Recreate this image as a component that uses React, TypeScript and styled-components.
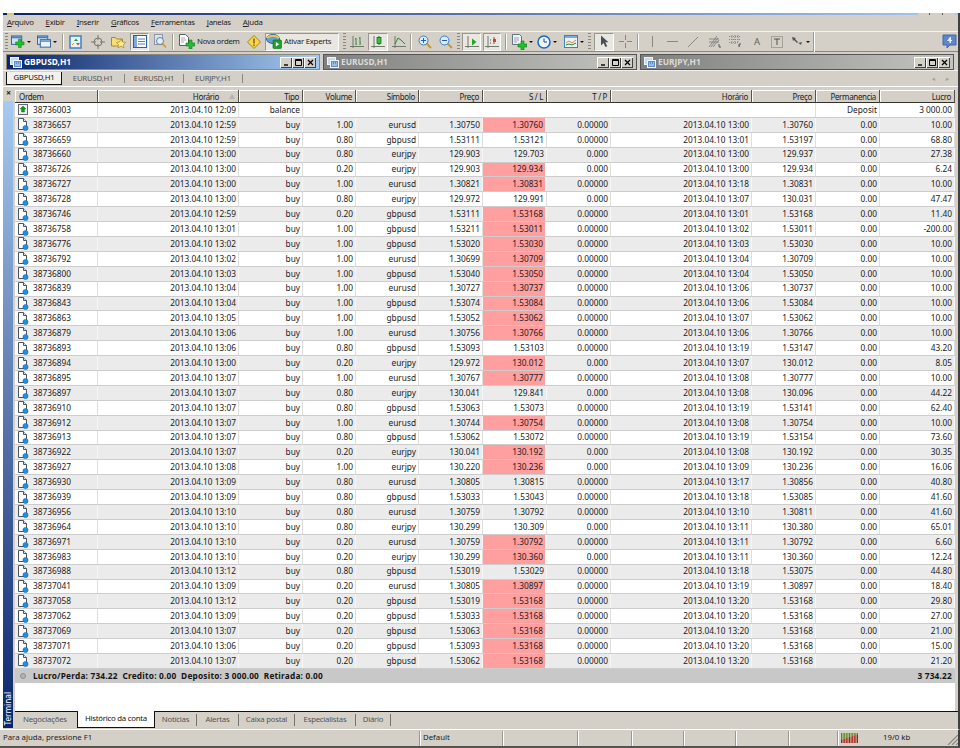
import React from 'react';
import styled, { createGlobalStyle } from 'styled-components';

const FONT = '"Noto Sans", "DejaVu Sans", sans-serif';
const FACE = '#d4d0c8';
const COLUMNS = '83px 141px 64px 53px 63px 64px 64px 64px 141px 64px 64px 75px';
const LABEL = 'font-size: 7.8px; letter-spacing: -0.25px;';

const Global = createGlobalStyle`
  html, body { margin: 0; padding: 0; background: #fff; }
  * { box-sizing: border-box; }
`;

const Screen = styled.div`
  width: 960px;
  height: 748px;
  padding-top: 13px;
  display: flex;
  flex-direction: column;
  overflow: hidden;
  background: #fff;
  color: #222;
  font: 8.3px/1 ${FONT};
`;

const Frame = styled.div`
  flex: 1;
  min-height: 0;
  margin-left: 3px;
  display: flex;
  flex-direction: column;
  background: ${FACE};
  border-right: 2px solid #404040;
`;

const AppTitle = styled.div`
  height: 2px;
  flex: none;
  display: flex;
  justify-content: space-between;
  padding: 0 3px 0 4px;
  background: linear-gradient(90deg, #0a246a, #a6caf0);
`;

const AppIconTip = styled.span`
  width: 7px;
  background: #d8c860;
`;

const AppButtonTips = styled.span`
  width: 37px;
  background: linear-gradient(90deg, ${FACE} 0 11px, #555 11px 12px, ${FACE} 12px 24px, #555 24px 25px, ${FACE} 25px);
`;

const MenuBar = styled.div`
  height: 16px;
  flex: none;
  display: flex;
  align-items: center;
  gap: 12px;
  padding-left: 4px;
  ${LABEL}
`;

const MenuItem = styled.span`
  display: inline-block;
  &::first-letter { text-decoration: underline; }
`;

const Toolbar = styled.div`
  height: 21px;
  flex: none;
  display: flex;
  align-items: center;
  padding-left: 2px;
  border-top: 1px solid #f4f2ec;
  border-bottom: 1px solid #8a877f;
`;

const Grip = styled.div<{ $ml?: number }>`
  width: 3px;
  height: 17px;
  flex: none;
  margin-left: ${({ $ml }) => $ml ?? 0}px;
  background: repeating-linear-gradient(180deg, #8a877f 0 1px, transparent 1px 3px);
`;

const Sep = styled.div<{ $ml: number; $light?: boolean }>`
  width: 2px;
  height: ${({ $light }) => ($light ? 20 : 16)}px;
  flex: none;
  margin-left: ${({ $ml }) => $ml}px;
  border-left: 1px solid #a09d95;
  border-right: 1px solid #fff;
`;

const Tool = styled.div<{ $w: number; $ml: number; $on?: boolean; $start?: boolean }>`
  width: ${({ $w }) => $w}px;
  height: 18px;
  flex: none;
  margin-left: ${({ $ml }) => $ml}px;
  display: flex;
  align-items: center;
  justify-content: ${({ $start }) => ($start ? 'flex-start' : 'center')};
  gap: 2px;
  white-space: nowrap;
  ${LABEL}
  ${({ $on }) =>
    $on &&
    `background: #e9e7e1;
     border: 1px solid;
     border-color: #9a978f #fff #fff #9a978f;`}
`;

const Caret = styled.span`
  width: 0;
  height: 0;
  flex: none;
  border-left: 2px solid transparent;
  border-right: 2px solid transparent;
  border-top: 2px solid #111;
`;

const Spacer = styled.div`
  flex: 1;
`;

const WindowStrip = styled.div`
  height: 18px;
  flex: none;
  display: flex;
  gap: 5px;
  padding: 3px 3px 1px 4px;
`;

const WindowTitle = styled.div<{ $active?: boolean }>`
  width: 312px;
  flex: none;
  display: flex;
  align-items: center;
  gap: 2px;
  padding: 0 3px;
  font-weight: 700;
  font-size: 8.4px;
  color: ${({ $active }) => ($active ? '#fff' : '#dcdad4')};
  background: ${({ $active }) =>
    $active
      ? 'linear-gradient(90deg, #0a246a, #a6caf0)'
      : 'linear-gradient(90deg, #808080, #c4c4c0)'};
  box-shadow: 0 0 0 1px ${({ $active }) => ($active ? '#8a877f' : '#555')};
`;

const WinButtons = styled.div`
  margin-left: auto;
  display: flex;
`;

const WinButton = styled.div`
  width: 12px;
  height: 11px;
  background: ${FACE};
  box-shadow: inset 1px 1px #fff, inset -1px -1px #404040;
  display: flex;
  align-items: center;
  justify-content: center;
  color: #000;
`;

const ChartTabs = styled.div`
  height: 17px;
  flex: none;
  display: flex;
  align-items: stretch;
  padding: 1px 0 1px 3px;
  border-top: 1px solid #f4f2ec;
  border-bottom: 1px solid #fff;
  ${LABEL}
`;

const ChartTab = styled.div<{ $active?: boolean; $w: number }>`
  width: ${({ $w }) => $w}px;
  flex: none;
  display: flex;
  align-items: center;
  justify-content: center;
  color: ${({ $active }) => ($active ? '#111' : '#555')};
  ${({ $active }) =>
    $active
      ? 'background: #f2f1ec; border: 1px solid #111; border-top: 0;'
      : 'border-right: 1px solid #8a877f; margin: 2px 0;'}
`;

const Pager = styled.div`
  margin: auto 9px auto auto;
  display: flex;
  gap: 11px;
  color: #a8a59d;
  font-size: 7px;
`;

const Terminal = styled.div`
  flex: 1;
  min-height: 0;
  display: flex;
`;

const Side = styled.div`
  width: 10px;
  flex: none;
  margin-right: 2px;
  display: flex;
  flex-direction: column;
`;

const SideClose = styled.div`
  height: 14px;
  padding-top: 1px;
  padding-left: 1px;
  text-align: center;
  font-weight: 700;
  font-size: 9px;
`;

const SideBand = styled.div`
  flex: 1;
  display: flex;
  align-items: flex-end;
  justify-content: center;
  background: linear-gradient(180deg, #a6caf0, #0a246a);
  color: #fff;
  margin-bottom: 1px;
`;

const SideLabel = styled.span`
  writing-mode: vertical-rl;
  transform: rotate(180deg);
  font-size: 8.2px;
  padding-top: 2px;
`;

const Pane = styled.div`
  flex: 1;
  min-width: 0;
  padding-top: 3px;
  display: flex;
  flex-direction: column;
`;

const HeaderRow = styled.div`
  height: 13px;
  flex: none;
  width: 940px;
  display: grid;
  grid-template-columns: ${COLUMNS};
  font-size: 8px;
  letter-spacing: -0.35px;
`;

const HeaderCell = styled.div<{ $left?: boolean }>`
  display: flex;
  align-items: center;
  justify-content: ${({ $left }) => ($left ? 'flex-start' : 'flex-end')};
  padding: 1px 3px 0 4px;
  border-right: 1px solid #55534e;
  border-bottom: 1px solid #33322f;
  box-shadow: inset 1px 1px #fff;
`;

const SortMark = styled.span`
  width: 0;
  height: 0;
  margin-left: 10px;
  border-left: 3px solid transparent;
  border-right: 3px solid transparent;
  border-bottom: 5px solid #b5b2aa;
`;

const Sheet = styled.div`
  flex: 1;
  min-height: 0;
  width: 940px;
  background: #fff;
  display: flex;
  flex-direction: column;
`;

const Row = styled.div<{ $alt?: boolean }>`
  height: 14.9px;
  flex: none;
  display: grid;
  grid-template-columns: ${COLUMNS};
  background: ${({ $alt }) => ($alt ? '#ebebeb' : '#fff')};
  border-bottom: 1px solid #cdcdcd;
`;

const Cell = styled.div<{ $alt?: boolean; $hit?: boolean; $span?: number; $first?: boolean }>`
  display: flex;
  align-items: center;
  justify-content: ${({ $first }) => ($first ? 'flex-start' : 'flex-end')};
  gap: 4px;
  padding: 0 ${({ $first }) => ($first ? 0 : 2)}px 0 ${({ $first }) => ($first ? 2 : 0)}px;
  white-space: nowrap;
  grid-column: span ${({ $span }) => $span ?? 1};
  background: ${({ $hit }) => ($hit ? '#ff9f9f' : 'transparent')};
  background-clip: padding-box;
  border-right: ${({ $hit }) => ($hit ? 2 : 1)}px solid
    ${({ $alt, $hit }) => ($hit ? ($alt ? '#f4f4f4' : '#fff') : $alt ? '#f6f6f6' : '#dedede')};
`;

const Summary = styled.div`
  height: 14.5px;
  flex: none;
  display: flex;
  align-items: center;
  gap: 5px;
  padding: 0 3px 0 5px;
  background: #c8c8c8;
  font-weight: 700;
  letter-spacing: 0.2px;
  color: #151515;
`;

const Dot = styled.span`
  width: 6px;
  height: 6px;
  border-radius: 50%;
  border: 1px solid #8e8e8e;
  background: #b4b4b4;
  margin-right: 2px;
`;

const SummaryTotal = styled.span`
  margin-left: auto;
`;

const TermTabs = styled.div`
  height: 16px;
  flex: none;
  display: flex;
  align-items: stretch;
  padding: 0 4px 1px 8px;
  border-top: 1px solid #111;
  box-sizing: content-box;
  ${LABEL}
`;

const TermTab = styled.div<{ $w: number; $active?: boolean; $plain?: boolean }>`
  width: ${({ $w }) => $w}px;
  flex: none;
  display: flex;
  align-items: center;
  justify-content: ${({ $plain }) => ($plain ? 'flex-start' : 'center')};
  padding-bottom: 1px;
  color: ${({ $active }) => ($active ? '#111' : '#555')};
  ${({ $active, $plain }) =>
    $active
      ? 'background: #fff; border: 1px solid #111; border-top: 0; margin-top: -1px;'
      : $plain
        ? ''
        : 'border-right: 1px solid #77746d; margin: 2px 0;'}
`;

const StatusBar = styled.div`
  height: 19px;
  flex: none;
  display: flex;
  align-items: stretch;
  background: ${FACE};
  border-top: 1px solid #fff;
  border-bottom: 2px solid #55534e;
  border-right: 2px solid #404040;
  font-size: 7.8px;
`;

const StatusCell = styled.div<{ $w?: number }>`
  ${({ $w }) => ($w ? `width: ${$w}px; flex: none;` : 'flex: 1;')}
  display: flex;
  align-items: center;
  padding: 0 0 1px 3px;
  margin-top: 1px;
  & + & { border-left: 1px solid #9a978f; box-shadow: inset 1px 0 #fff; }
`;

const StatusKb = styled.span`
  margin-left: 24px;
`;

const GripCorner = styled.svg`
  margin-left: auto;
  align-self: flex-end;
`;

/* icons */
const RowDoc = () => (
  <svg width="12" height="13" viewBox="0 0 12 13">
    <path d="M1.5.5h5l3 3v8h-8z" fill="#fff" stroke="#4a5560" />
    <path d="M6.5.5v3h3" fill="#dfe6ee" stroke="#4a5560" />
    <circle cx="8.5" cy="10" r="2.6" fill="#1f8fe0" stroke="#0e5fa8" strokeWidth=".5" />
  </svg>
);

const BalanceIcon = () => (
  <svg width="12" height="13" viewBox="0 0 12 13">
    <rect x="1.5" y="1.5" width="9" height="10" fill="#f2f2ee" stroke="#667" />
    <path d="M6 3l3 3H7.5v3h-3V6H3z" fill="#0a9a1c" stroke="#06660f" strokeWidth=".4" />
  </svg>
);

const Plus = ({ x, y }: { x: number; y: number }) => (
  <path
    d={`M${x + 3} ${y}h3v3h3v3h-3v3h-3v-3h-3v-3h3z`}
    fill="#22c02c"
    stroke="#0c7a14"
    strokeWidth=".6"
  />
);

const NewChart = () => (
  <svg width="15" height="14" viewBox="0 0 15 14">
    <rect x=".5" y=".5" width="11" height="9" fill="#cfe0f4" stroke="#2c5f9e" />
    <rect x="1" y="1" width="10" height="2" fill="#3f7fc6" />
    <Plus x={5} y={4} />
  </svg>
);

const Profiles = () => (
  <svg width="15" height="14" viewBox="0 0 15 14">
    <rect x=".5" y=".5" width="11" height="9" fill="#dbe7f5" stroke="#2c5f9e" />
    <rect x="1" y="1" width="10" height="2" fill="#3f7fc6" />
    <rect x="3.5" y="4.5" width="11" height="8" fill="#eef3fa" stroke="#2c5f9e" />
    <rect x="4" y="5" width="10" height="2" fill="#6f9fd8" />
  </svg>
);

const MarketWatch = () => (
  <svg width="13" height="14" viewBox="0 0 13 14">
    <rect x="1" y="1" width="11" height="12" fill="#eaf2fb" stroke="#3f7fc6" strokeWidth="1.5" />
    <path d="M7 3.5l2 2.5H5z" fill="#1aa22a" />
    <path d="M9 10.5L7 8h4z" fill="#e0382a" />
    <path d="M3 10l2-2" stroke="#e0842a" />
  </svg>
);

const Navigator = () => (
  <svg width="14" height="14" viewBox="0 0 14 14" fill="none" stroke="#7a776f">
    <circle cx="7" cy="7" r="4" />
    <path d="M7 0v5M7 9v5M0 7h5M9 7h5" />
  </svg>
);

const Favorites = () => (
  <svg width="15" height="14" viewBox="0 0 15 14">
    <path d="M.5 2.5h4l1 1.5h6v7h-11z" fill="#f7dc7a" stroke="#a88a2a" />
    <path d="M10 4l1.5 3 3.2.4-2.3 2.2.6 3.2-3-1.6-3 1.6.6-3.2-2.3-2.2 3.2-.4z" fill="#fbe98c" stroke="#a88a2a" strokeWidth=".7" />
  </svg>
);

const TerminalIcon = () => (
  <svg width="14" height="13" viewBox="0 0 14 13">
    <rect x=".5" y=".5" width="13" height="12" fill="#fff" stroke="#2c5f9e" />
    <rect x="1" y="1" width="3" height="11" fill="#7fa9dc" />
    <path d="M5 4h7M5 6.5h7M5 9h7" stroke="#2c5f9e" strokeWidth=".8" />
  </svg>
);

const Tester = () => (
  <svg width="13" height="15" viewBox="0 0 13 15">
    <rect x=".5" y=".5" width="8" height="10" fill="#dbe3ec" stroke="#8a97a8" />
    <circle cx="6" cy="7" r="3.5" fill="#e8eef5" stroke="#5f7fa8" />
    <path d="M8.5 9.5l3.5 4" stroke="#c9a02a" strokeWidth="1.6" />
  </svg>
);

const NewOrder = () => (
  <svg width="16" height="15" viewBox="0 0 16 15">
    <path d="M.5.5h6l3 3v8h-9z" fill="#fff" stroke="#55606c" />
    <path d="M2 4h4M2 6h5M2 8h3" stroke="#8a97a8" strokeWidth=".8" />
    <Plus x={7} y={6} />
  </svg>
);

const Warn = () => (
  <svg width="14" height="14" viewBox="0 0 14 14">
    <path d="M7 .5L13.5 7 7 13.5.5 7z" fill="#f8d648" stroke="#a2861c" />
    <path d="M6.3 3.5h1.4v5H6.3zM6.3 9.5h1.4V11H6.3z" fill="#7a5a10" />
  </svg>
);

const Experts = () => (
  <svg width="16" height="15" viewBox="0 0 16 15">
    <ellipse cx="7" cy="5" rx="6.5" ry="4.5" fill="#5f9fd8" stroke="#2c5f9e" />
    <path d="M1 4c3-3 9-3 12 0" fill="none" stroke="#f0c848" strokeWidth="2" />
    <rect x="7" y="6" width="8.5" height="8.5" rx="1" fill="#1aa22a" stroke="#0c6a16" strokeWidth=".6" />
    <path d="M9.8 8l3.4 2.3-3.4 2.3z" fill="#fff" />
  </svg>
);

const Axes = ({ children }: { children?: React.ReactNode }) => (
  <svg width="14" height="14" viewBox="0 0 14 14" fill="none">
    <path d="M3 1v12M0 11.5h14" stroke="#6f7a68" />
    {children}
  </svg>
);

const BarsIcon = () => (
  <Axes>
    <path d="M6 3v7M5 4h1M6 9h1M10 2v8M9 3h1M10 8h1" stroke="#3a8a44" />
  </Axes>
);

const CandlesIcon = () => (
  <Axes>
    <path d="M8 1v9" stroke="#1a5a22" />
    <rect x="6" y="2.5" width="4" height="6" fill="#37c23d" stroke="#1a5a22" strokeWidth=".7" />
  </Axes>
);

const LineIcon = () => (
  <Axes>
    <path d="M3 9l3-6 3 2 4 4" stroke="#1f8a2a" />
  </Axes>
);

const Zoom = ({ plus }: { plus?: boolean }) => (
  <svg width="14" height="14" viewBox="0 0 14 14" fill="none">
    <path d="M8.5 8.5l4.5 4.5" stroke="#c9962a" strokeWidth="2" />
    <circle cx="5.5" cy="5.5" r="4.5" fill="#d9ecfb" stroke="#3a7ec2" />
    <path d={plus ? 'M3 5.5h5M5.5 3v5' : 'M3 5.5h5'} stroke="#2c5f9e" />
  </svg>
);

const AutoScroll = () => (
  <Axes>
    <path d="M7 3.5l4.5 3.5L7 10.5z" fill="#1fa82a" />
  </Axes>
);

const ChartShift = () => (
  <Axes>
    <path d="M9 2v7" stroke="#a84030" />
    <rect x="8" y="4" width="3" height="3" fill="#d8402a" />
    <path d="M5 5h1M5 8h1" stroke="#555" />
  </Axes>
);

const Template = () => (
  <svg width="15" height="16" viewBox="0 0 15 16">
    <path d="M.5.5h7l2 2v8h-9z" fill="#eef1f5" stroke="#667380" />
    <path d="M2 4h5M2 6h5M2 8h3" stroke="#8a97a8" strokeWidth=".8" />
    <Plus x={6} y={7} />
  </svg>
);

const Clock = () => (
  <svg width="14" height="14" viewBox="0 0 14 14" fill="none">
    <circle cx="7" cy="7" r="6" fill="#eaf4fd" stroke="#1f6ab8" strokeWidth="1.5" />
    <path d="M7 3.5V7h3" stroke="#1f4a8a" />
  </svg>
);

const Indicators = () => (
  <svg width="14" height="13" viewBox="0 0 14 13" fill="none">
    <rect x=".5" y=".5" width="13" height="12" fill="#eaf2fb" stroke="#3f7fc6" />
    <rect x="1" y="1" width="12" height="2" fill="#7fa9dc" />
    <path d="M2 8l3-2 3 2 4-3" stroke="#e0842a" />
    <path d="M2 10l3-1 3 1 4-2" stroke="#1f8a2a" />
  </svg>
);

const Arrow = () => (
  <svg width="11" height="13" viewBox="0 0 11 13">
    <path d="M2 .5v10l2.5-2.5 2 4 1.8-.8-2-4H9.5z" fill="#4a4f55" />
  </svg>
);

const Cross = () => (
  <svg width="13" height="13" viewBox="0 0 13 13" stroke="#8a877f" fill="none">
    <path d="M6.5 0v5M6.5 8v5M0 6.5h5M8 6.5h5" />
  </svg>
);

const VLine = () => (
  <svg width="3" height="11" viewBox="0 0 3 11">
    <path d="M1.5 0v11" stroke="#8a877f" />
  </svg>
);

const HLine = () => (
  <svg width="11" height="3" viewBox="0 0 11 3">
    <path d="M0 1.5h11" stroke="#8a877f" />
  </svg>
);

const Slant = () => (
  <svg width="10" height="10" viewBox="0 0 10 10">
    <path d="M0 10L10 0" stroke="#8a877f" />
  </svg>
);

const Fib = () => (
  <svg width="14" height="13" viewBox="0 0 14 13" fill="none" stroke="#777">
    <path d="M1 12L9 1M3 12l7-9M5 12l6-7M1 4h10M1 7h10" strokeWidth=".8" />
    <path d="M11 9v3h2" stroke="#555" />
  </svg>
);

const FibGrid = () => (
  <svg width="13" height="13" viewBox="0 0 13 13" fill="none" stroke="#8a877f" strokeDasharray="1 1">
    <path d="M0 1.5h12M0 4.5h12M0 7.5h9M3 0v10M6 0v10M9 0v7" />
    <path d="M10 9v3M10 9h2M10 11h1" strokeDasharray="none" stroke="#555" />
  </svg>
);

const TextA = styled.span`
  color: #66635c;
  font-size: 9.5px;
`;

const TextBox = () => (
  <svg width="12" height="12" viewBox="0 0 12 12" fill="none">
    <rect x=".5" y=".5" width="11" height="11" stroke="#77746d" strokeDasharray="1 1" />
    <path d="M3 3h6M6 3v6" stroke="#55534e" />
  </svg>
);

const Arrows = () => (
  <svg width="13" height="11" viewBox="0 0 13 11" fill="#555">
    <path d="M1 1l4 1-1 1 3 3-1 1-3-3-1 1zM7 7l4-1-1 3-1-1z" />
  </svg>
);

const Notify = () => (
  <svg width="15" height="15" viewBox="0 0 15 15">
    <path d="M1 1h13v10H8l-3 3v-3H1z" fill="#5f86c8" stroke="#3f66a8" />
    <path d="M8 3L5 7h2.5v2H9V7h1V6H9V3z" fill="#e8eef8" />
  </svg>
);

const WinIcon = () => (
  <svg width="12" height="11" viewBox="0 0 12 11">
    <rect x=".5" y=".5" width="8" height="7" fill="#c8daf0" stroke="#eef4fb" />
    <rect x="3.5" y="3.5" width="8" height="7" fill="#5f8fd0" stroke="#eef4fb" />
    <path d="M5 6h1M7 6h1M9 6h1M5 8h5" stroke="#fff" strokeWidth=".8" />
  </svg>
);

const BAR_KEYS = [3, 4, 4, 5, 5, 6, 6, 7, 7, 8, 8];

const TrafficBars = () => (
  <svg width="18" height="10" viewBox="0 0 18 10">
    {BAR_KEYS.map((h, i) => (
      <g key={i}>
        <rect x={i * 1.6} y={0} width="1" height={10 - h} fill="#5d8a1c" />
        <rect x={i * 1.6} y={10 - h} width="1" height={h} fill="#a81c10" />
      </g>
    ))}
  </svg>
);

const WindowHead = ({ name, active }: { name: string; active?: boolean }) => (
  <WindowTitle $active={active}>
    <WinIcon />
    {name}
    <WinButtons>
      <WinButton>
        <svg width="7" height="7"><path d="M1 6h4" stroke="#000" strokeWidth="1.4" /></svg>
      </WinButton>
      <WinButton>
        <svg width="7" height="7" fill="none"><path d="M.5.5h6v6h-6zM.5 1.5h6" stroke="#000" /></svg>
      </WinButton>
      <WinButton>
        <svg width="7" height="7"><path d="M1 1l5 5M6 1L1 6" stroke="#000" strokeWidth="1.2" /></svg>
      </WinButton>
    </WinButtons>
  </WindowTitle>
);

type Trade = [string, string, string, string, string, string, string, string, string];

const TRADES: Trade[] = [
  ['38736657', '12:59', '1.00', 'eurusd', '1.30750', '1.30760', '13:00', '1.30760', '10.00'],
  ['38736659', '12:59', '0.80', 'gbpusd', '1.53111', '1.53121', '13:01', '1.53197', '68.80'],
  ['38736660', '13:00', '0.80', 'eurjpy', '129.903', '129.703', '13:00', '129.937', '27.38'],
  ['38736726', '13:00', '0.20', 'eurjpy', '129.903', '129.934', '13:00', '129.934', '6.24'],
  ['38736727', '13:00', '1.00', 'eurusd', '1.30821', '1.30831', '13:18', '1.30831', '10.00'],
  ['38736728', '13:00', '0.80', 'eurjpy', '129.972', '129.991', '13:07', '130.031', '47.47'],
  ['38736746', '12:59', '0.20', 'gbpusd', '1.53111', '1.53168', '13:01', '1.53168', '11.40'],
  ['38736758', '13:01', '1.00', 'gbpusd', '1.53211', '1.53011', '13:02', '1.53011', '-200.00'],
  ['38736776', '13:02', '1.00', 'gbpusd', '1.53020', '1.53030', '13:03', '1.53030', '10.00'],
  ['38736792', '13:02', '1.00', 'eurusd', '1.30699', '1.30709', '13:04', '1.30709', '10.00'],
  ['38736800', '13:03', '1.00', 'gbpusd', '1.53040', '1.53050', '13:04', '1.53050', '10.00'],
  ['38736839', '13:04', '1.00', 'eurusd', '1.30727', '1.30737', '13:06', '1.30737', '10.00'],
  ['38736843', '13:04', '1.00', 'gbpusd', '1.53074', '1.53084', '13:06', '1.53084', '10.00'],
  ['38736863', '13:05', '1.00', 'gbpusd', '1.53052', '1.53062', '13:07', '1.53062', '10.00'],
  ['38736879', '13:06', '1.00', 'eurusd', '1.30756', '1.30766', '13:06', '1.30766', '10.00'],
  ['38736893', '13:06', '0.80', 'gbpusd', '1.53093', '1.53103', '13:19', '1.53147', '43.20'],
  ['38736894', '13:00', '0.20', 'eurjpy', '129.972', '130.012', '13:07', '130.012', '8.05'],
  ['38736895', '13:07', '1.00', 'eurusd', '1.30767', '1.30777', '13:08', '1.30777', '10.00'],
  ['38736897', '13:07', '0.80', 'eurjpy', '130.041', '129.841', '13:08', '130.096', '44.22'],
  ['38736910', '13:07', '0.80', 'gbpusd', '1.53063', '1.53073', '13:19', '1.53141', '62.40'],
  ['38736912', '13:07', '1.00', 'eurusd', '1.30744', '1.30754', '13:08', '1.30754', '10.00'],
  ['38736913', '13:07', '0.80', 'gbpusd', '1.53062', '1.53072', '13:19', '1.53154', '73.60'],
  ['38736922', '13:07', '0.20', 'eurjpy', '130.041', '130.192', '13:08', '130.192', '30.35'],
  ['38736927', '13:08', '1.00', 'eurjpy', '130.220', '130.236', '13:09', '130.236', '16.06'],
  ['38736930', '13:09', '0.80', 'eurusd', '1.30805', '1.30815', '13:17', '1.30856', '40.80'],
  ['38736939', '13:09', '0.80', 'gbpusd', '1.53033', '1.53043', '13:18', '1.53085', '41.60'],
  ['38736956', '13:10', '0.80', 'eurusd', '1.30759', '1.30792', '13:10', '1.30811', '41.60'],
  ['38736964', '13:10', '0.80', 'eurjpy', '130.299', '130.309', '13:11', '130.380', '65.01'],
  ['38736971', '13:10', '0.20', 'eurusd', '1.30759', '1.30792', '13:11', '1.30792', '6.60'],
  ['38736983', '13:10', '0.20', 'eurjpy', '130.299', '130.360', '13:11', '130.360', '12.24'],
  ['38736988', '13:12', '0.80', 'gbpusd', '1.53019', '1.53029', '13:18', '1.53075', '44.80'],
  ['38737041', '13:09', '0.20', 'eurusd', '1.30805', '1.30897', '13:19', '1.30897', '18.40'],
  ['38737058', '13:12', '0.20', 'gbpusd', '1.53019', '1.53168', '13:20', '1.53168', '29.80'],
  ['38737062', '13:09', '0.20', 'gbpusd', '1.53033', '1.53168', '13:20', '1.53168', '27.00'],
  ['38737069', '13:07', '0.20', 'gbpusd', '1.53063', '1.53168', '13:20', '1.53168', '21.00'],
  ['38737071', '13:06', '0.20', 'gbpusd', '1.53093', '1.53168', '13:20', '1.53168', '15.00'],
  ['38737072', '13:07', '0.20', 'gbpusd', '1.53062', '1.53168', '13:20', '1.53168', '21.20'],
];

const DAY = '2013.04.10';
const HEADERS = ['Horário', 'Tipo', 'Volume', 'Símbolo', 'Preço', 'S / L', 'T / P', 'Horário', 'Preço', 'Permanencia', 'Lucro'];
const MENUS = ['Arquivo', 'Exibir', 'Inserir', 'Gráficos', 'Ferramentas', 'Janelas', 'Ajuda'];

const TradeRow = ({ trade, alt }: { trade: Trade; alt: boolean }) => {
  const [order, open, volume, symbol, price, sl, close, closePrice, profit] = trade;
  const zero = symbol === 'eurjpy' ? '0.000' : '0.00000';
  return (
    <Row $alt={alt}>
      <Cell $first $alt={alt}><RowDoc />{order}</Cell>
      <Cell $alt={alt}>{DAY} {open}</Cell>
      <Cell $alt={alt}>buy</Cell>
      <Cell $alt={alt}>{volume}</Cell>
      <Cell $alt={alt}>{symbol}</Cell>
      <Cell $alt={alt}>{price}</Cell>
      <Cell $alt={alt} $hit={sl === closePrice}>{sl}</Cell>
      <Cell $alt={alt}>{zero}</Cell>
      <Cell $alt={alt}>{DAY} {close}</Cell>
      <Cell $alt={alt}>{closePrice}</Cell>
      <Cell $alt={alt}>0.00</Cell>
      <Cell $alt={alt}>{profit}</Cell>
    </Row>
  );
};

export default function App() {
  return (
    <Screen>
      <Global />
      <Frame>
        <AppTitle>
          <AppIconTip />
          <AppButtonTips />
        </AppTitle>
        <MenuBar>
          {MENUS.map((m) => (
            <MenuItem key={m}>{m}</MenuItem>
          ))}
        </MenuBar>
        <Toolbar>
          <Grip />
          <Tool $w={20} $ml={3}><NewChart /><Caret /></Tool>
          <Tool $w={20} $ml={6}><Profiles /><Caret /></Tool>
          <Sep $ml={5} />
          <Tool $w={14} $ml={4}><MarketWatch /></Tool>
          <Tool $w={16} $ml={8}><Navigator /></Tool>
          <Tool $w={16} $ml={4}><Favorites /></Tool>
          <Tool $w={19} $ml={4} $on><TerminalIcon /></Tool>
          <Tool $w={16} $ml={3}><Tester /></Tool>
          <Sep $ml={4} />
          <Tool $w={61} $ml={5} $start><NewOrder />Nova ordem</Tool>
          <Tool $w={17} $ml={5}><Warn /></Tool>
          <Tool $w={74} $ml={3} $on $start><Experts />Ativar Experts</Tool>
          <Grip $ml={4} />
          <Tool $w={16} $ml={3}><BarsIcon /></Tool>
          <Tool $w={20} $ml={3} $on><CandlesIcon /></Tool>
          <Tool $w={17} $ml={2}><LineIcon /></Tool>
          <Sep $ml={3} />
          <Tool $w={17} $ml={4}><Zoom plus /></Tool>
          <Tool $w={17} $ml={4}><Zoom /></Tool>
          <Grip $ml={3} />
          <Tool $w={19} $ml={2} $on><AutoScroll /></Tool>
          <Tool $w={18} $ml={2} $on><ChartShift /></Tool>
          <Sep $ml={4} />
          <Tool $w={21} $ml={5}><Template /><Caret /></Tool>
          <Tool $w={22} $ml={3}><Clock /><Caret /></Tool>
          <Tool $w={21} $ml={5}><Indicators /><Caret /></Tool>
          <Grip $ml={4} />
          <Tool $w={20} $ml={3} $on><Arrow /></Tool>
          <Tool $w={17} $ml={3}><Cross /></Tool>
          <Sep $ml={3} />
          <Tool $w={14} $ml={6}><VLine /></Tool>
          <Tool $w={14} $ml={6}><HLine /></Tool>
          <Tool $w={14} $ml={7}><Slant /></Tool>
          <Tool $w={17} $ml={6}><Fib /></Tool>
          <Tool $w={16} $ml={4}><FibGrid /></Tool>
          <Tool $w={14} $ml={7}><TextA>A</TextA></Tool>
          <Tool $w={16} $ml={5}><TextBox /></Tool>
          <Tool $w={20} $ml={5}><Arrows /><Caret /></Tool>
          <Sep $ml={3} $light />
          <Spacer />
          <Tool $w={18} $ml={0}><Notify /></Tool>
        </Toolbar>
        <WindowStrip>
          <WindowHead name="GBPUSD,H1" active />
          <WindowHead name="EURUSD,H1" />
          <WindowHead name="EURJPY,H1" />
        </WindowStrip>
        <ChartTabs>
          <ChartTab $w={56} $active>GBPUSD,H1</ChartTab>
          <ChartTab $w={63}>EURUSD,H1</ChartTab>
          <ChartTab $w={59}>EURUSD,H1</ChartTab>
          <ChartTab $w={59}>EURJPY,H1</ChartTab>
          <Pager><span>◂</span><span>▸</span></Pager>
        </ChartTabs>
        <Terminal>
          <Side>
            <SideClose>×</SideClose>
            <SideBand><SideLabel>Terminal</SideLabel></SideBand>
          </Side>
          <Pane>
            <HeaderRow>
              <HeaderCell $left>Ordem</HeaderCell>
              {HEADERS.map((h, i) => (
                <HeaderCell key={i}>
                  {h}
                  {i === 0 && <SortMark />}
                </HeaderCell>
              ))}
            </HeaderRow>
            <Sheet>
              <Row>
                <Cell $first><BalanceIcon />38736003</Cell>
                <Cell>{DAY} 12:09</Cell>
                <Cell>balance</Cell>
                <Cell $span={7} />
                <Cell>Deposit</Cell>
                <Cell>3 000.00</Cell>
              </Row>
              {TRADES.map((t, i) => (
                <TradeRow key={t[0]} trade={t} alt={i % 2 === 0} />
              ))}
              <Summary>
                <Dot />
                <span>Lucro/Perda: 734.22&nbsp; Credito: 0.00&nbsp; Deposito: 3 000.00&nbsp; Retirada: 0.00</span>
                <SummaryTotal>3 734.22</SummaryTotal>
              </Summary>
            </Sheet>
            <TermTabs>
              <TermTab $w={54} $plain>Negociações</TermTab>
              <TermTab $w={78} $active>Histórico da conta</TermTab>
              <TermTab $w={42}>Notícias</TermTab>
              <TermTab $w={42}>Alertas</TermTab>
              <TermTab $w={56}>Caixa postal</TermTab>
              <TermTab $w={61}>Especialistas</TermTab>
              <TermTab $w={35}>Diário</TermTab>
            </TermTabs>
          </Pane>
        </Terminal>
      </Frame>
      <StatusBar>
        <StatusCell $w={419}>Para ajuda, pressione F1</StatusCell>
        <StatusCell $w={83}>Default</StatusCell>
        <StatusCell $w={75} />
        <StatusCell $w={54} />
        <StatusCell $w={52} />
        <StatusCell $w={52} />
        <StatusCell $w={53} />
        <StatusCell $w={49} />
        <StatusCell>
          <TrafficBars />
          <StatusKb>19/0 kb</StatusKb>
          <GripCorner width="13" height="13" viewBox="0 0 13 13">
            <path d="M3 13L13 3M7 13l6-6M11 13l2-2" stroke="#8a877f" strokeWidth="1.2" />
          </GripCorner>
        </StatusCell>
      </StatusBar>
    </Screen>
  );
}
